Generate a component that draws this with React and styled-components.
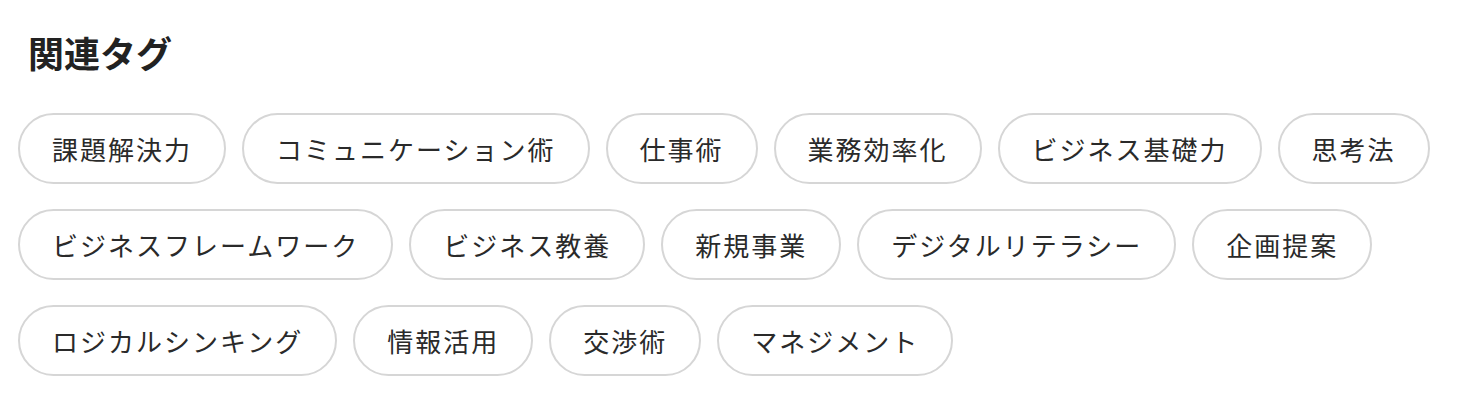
import React from 'react';
import styled, { createGlobalStyle } from 'styled-components';

const GlobalStyle = createGlobalStyle`
  body {
    margin: 0;
    background: #ffffff;
    font-family: "Noto Sans CJK JP", "Noto Sans", sans-serif;
  }
`;

const Section = styled.section`
  padding: 27px 18px 0 18px;
`;

const Heading = styled.h2`
  margin: 0 0 35px 0;
  padding-left: 10px;
  font-size: 36px;
  line-height: 51px;
  font-weight: 700;
  color: #222222;
`;

const TagList = styled.ul`
  display: flex;
  flex-wrap: wrap;
  gap: 25px 16px;
  margin: 0;
  padding: 0;
  list-style: none;
`;

const Tag = styled.li`
  display: flex;
  align-items: center;
  height: 71px;
  box-sizing: border-box;
  padding: 0 32px;
  border: 2px solid #d6d6d6;
  border-radius: 36px;
  background: #ffffff;
  color: #2a2a2a;
  font-size: 26px;
  letter-spacing: 2px;
  white-space: nowrap;
  cursor: pointer;
`;

const tags = [
  '課題解決力',
  'コミュニケーション術',
  '仕事術',
  '業務効率化',
  'ビジネス基礎力',
  '思考法',
  'ビジネスフレームワーク',
  'ビジネス教養',
  '新規事業',
  'デジタルリテラシー',
  '企画提案',
  'ロジカルシンキング',
  '情報活用',
  '交渉術',
  'マネジメント',
];

const App = () => {
  return (
    <>
      <GlobalStyle />
      <Section>
        <Heading>関連タグ</Heading>
        <TagList>
          {tags.map((t) => (
            <Tag key={t}>{t}</Tag>
          ))}
        </TagList>
      </Section>
    </>
  );
};

export default App;
